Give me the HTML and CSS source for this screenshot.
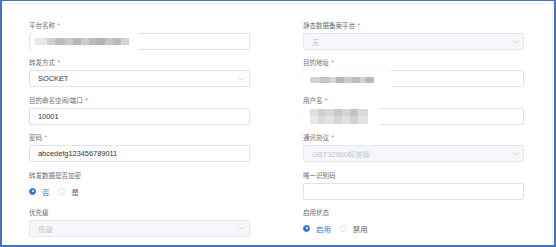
FILE: index.html
```html
<!DOCTYPE html>
<html lang="zh-CN">
<head>
<meta charset="utf-8">
<title>转发配置</title>
<link rel="stylesheet" href="styles.css">
</head>
<body>
<div class="frame">
  <div class="panel">
    <div class="topline"></div>
    <form class="form">
      <div class="item">
        <div class="label">平台名称<span class="req">*</span></div>
        <div class="input">
          <span class="mask mask-a"><span class="mosaic"></span></span>
        </div>
      </div>
      <div class="item">
        <div class="label">静态数据备案平台<span class="req">*</span></div>
        <div class="input select disabled"><span class="val">无</span>
          <svg class="chev" viewBox="0 0 8 5" width="7" height="4"><path d="M0.5 0.5 L4 4 L7.5 0.5" fill="none" stroke="#c0c4cc" stroke-width="0.9"/></svg>
        </div>
      </div>

      <div class="item">
        <div class="label">转发方式<span class="req">*</span></div>
        <div class="input select"><span class="val">SOCKET</span>
          <svg class="chev" viewBox="0 0 8 5" width="7" height="4"><path d="M0.5 0.5 L4 4 L7.5 0.5" fill="none" stroke="#c0c4cc" stroke-width="0.9"/></svg>
        </div>
      </div>
      <div class="item">
        <div class="label">目的地址<span class="req">*</span></div>
        <div class="input">
          <span class="mask mask-b"><span class="mosaic"></span></span>
        </div>
      </div>

      <div class="item">
        <div class="label">目的命名空间/端口<span class="req">*</span></div>
        <div class="input"><span class="val">10001</span></div>
      </div>
      <div class="item">
        <div class="label">用户名<span class="req">*</span></div>
        <div class="input">
          <span class="mask mask-c"><span class="mosaic"></span></span>
        </div>
      </div>

      <div class="item">
        <div class="label">密码<span class="req">*</span></div>
        <div class="input"><span class="val">abcedefg123456789011</span></div>
      </div>
      <div class="item">
        <div class="label">通讯协议<span class="req">*</span></div>
        <div class="input select disabled"><span class="val">GBT32960标准版</span>
          <svg class="chev" viewBox="0 0 8 5" width="7" height="4"><path d="M0.5 0.5 L4 4 L7.5 0.5" fill="none" stroke="#c0c4cc" stroke-width="0.9"/></svg>
        </div>
      </div>

      <div class="item">
        <div class="label">转发数据是否加密</div>
        <div class="radios">
          <span class="opt on"><span class="radio"></span><span class="otext">否</span></span>
          <span class="opt"><span class="radio"></span><span class="otext">是</span></span>
        </div>
      </div>
      <div class="item">
        <div class="label">唯一识别码</div>
        <div class="input"></div>
      </div>

      <div class="item">
        <div class="label">优先级</div>
        <div class="input select disabled"><span class="val">低级</span>
          <svg class="chev" viewBox="0 0 8 5" width="7" height="4"><path d="M0.5 0.5 L4 4 L7.5 0.5" fill="none" stroke="#c0c4cc" stroke-width="0.9"/></svg>
        </div>
      </div>
      <div class="item">
        <div class="label">启用状态</div>
        <div class="radios">
          <span class="opt on"><span class="radio"></span><span class="otext">启用</span></span>
          <span class="opt"><span class="radio"></span><span class="otext">禁用</span></span>
        </div>
      </div>
    </form>
  </div>
</div>
</body>
</html>
```
FILE: styles.css
```css
html, body {
  margin: 0;
  padding: 0;
  background: #fff;
}
body {
  font-family: "Liberation Sans", "Noto Sans CJK SC", sans-serif;
}
.frame {
  width: 556px;
  height: 247px;
  box-sizing: border-box;
  border: 2px solid #4472c4;
  border-top-width: 1px;
  background: #fff;
  overflow: hidden;
}
.panel {
  height: 100%;
  margin-right: 1px;
  border-right: 1px solid #eef0f4;
}
.topline {
  margin: 2px 0 0 6px;
  width: 537px;
  height: 1px;
  background: #eef0f4;
}
.form {
  margin: 0;
  padding: 17px 0 0 27px;
  display: grid;
  grid-template-columns: 221px 221px;
  column-gap: 53px;
  row-gap: 8.4px;
}
.item {
  display: flex;
  flex-direction: column;
  gap: 2px;
}
.label {
  height: 10px;
  line-height: 10px;
  font-size: 6.5px;
  color: #6b6e73;
  white-space: nowrap;
}
.req {
  color: #f56c6c;
  margin-left: 2.5px;
}
.input {
  position: relative;
  height: 17px;
  box-sizing: border-box;
  border: 1px solid #dfe2e8;
  border-radius: 2px;
  padding: 0 8px;
  display: flex;
  align-items: center;
  font-size: 7.4px;
  color: #303133;
  background: #fff;
}
.select {
  justify-content: space-between;
}
.disabled {
  background: #f5f7fa;
  border-color: #e4e7ed;
  color: #c0c4cc;
}
.chev {
  margin-right: -4px;
  display: block;
}
.radios {
  height: 17px;
  display: flex;
  align-items: center;
  gap: 9px;
}
.opt {
  display: flex;
  align-items: center;
  gap: 6px;
  font-size: 7.4px;
  color: #606266;
}
.opt.on {
  color: #2b7bd6;
}
.radio {
  width: 7px;
  height: 7px;
  box-sizing: border-box;
  border-radius: 50%;
  border: 1px solid #dcdfe6;
  background: #fff;
  position: relative;
}
.opt.on .radio {
  border-color: #2b7bd6;
  background: #2b7bd6;
}
.opt.on .radio::after {
  content: "";
  position: absolute;
  left: 1.5px;
  top: 1.5px;
  width: 2px;
  height: 2px;
  border-radius: 50%;
  background: #fff;
}
/* obscured (blurred) field values */
.mask {
  position: absolute;
  background: #fff;
  border-radius: 4px;
  box-shadow: 0 0 3px 2px #fff;
}
.mosaic {
  position: absolute;
  filter: blur(0.7px);
}
.mask-a {
  left: 3px;
  top: -2px;
  width: 104px;
  height: 20px;
}
.mask-a .mosaic {
  left: 2px;
  top: 6px;
  width: 94px;
  height: 7px;
  background: linear-gradient(90deg,
    #e6e6e6 0 12px, #cfcfcf 12px 20px, #bdbdbd 20px 30px, #c9c9c9 30px 38px,
    #b7b7b7 38px 46px, #cdcdcd 46px 54px, #bbbbbb 54px 62px, #b2b2b2 62px 70px,
    #c8c8c8 70px 78px, #bcbcbc 78px 86px, #d2d2d2 86px 94px);
}
.mask-b {
  left: 0;
  top: 0;
  width: 86px;
  height: 18px;
}
.mask-b .mosaic {
  left: 6px;
  top: 6px;
  width: 64px;
  height: 6px;
  background: linear-gradient(90deg,
    #d0d0d0 0 10px, #c4c4c4 10px 20px, #d6d6d6 20px 26px, #b8b8b8 26px 34px,
    #cbcbcc 34px 42px, #bdbdbd 42px 50px, #d0d0d0 50px 56px, #b9b9b9 56px 64px);
}
.mask-c {
  left: 0;
  top: -1px;
  width: 74px;
  height: 18px;
}
.mask-c .mosaic {
  left: 6px;
  top: 1px;
  width: 58px;
  height: 15px;
  background:
    linear-gradient(180deg, rgba(255,255,255,0.0) 0 7px, rgba(255,255,255,0.25) 7px 15px),
    linear-gradient(90deg,
    #e0e0e0 0 8px, #cfcfcf 8px 16px, #d9d9d9 16px 24px, #c8c8c8 24px 32px,
    #d4d4d4 32px 40px, #c2c2c2 40px 48px, #dadada 48px 58px);
}
```
